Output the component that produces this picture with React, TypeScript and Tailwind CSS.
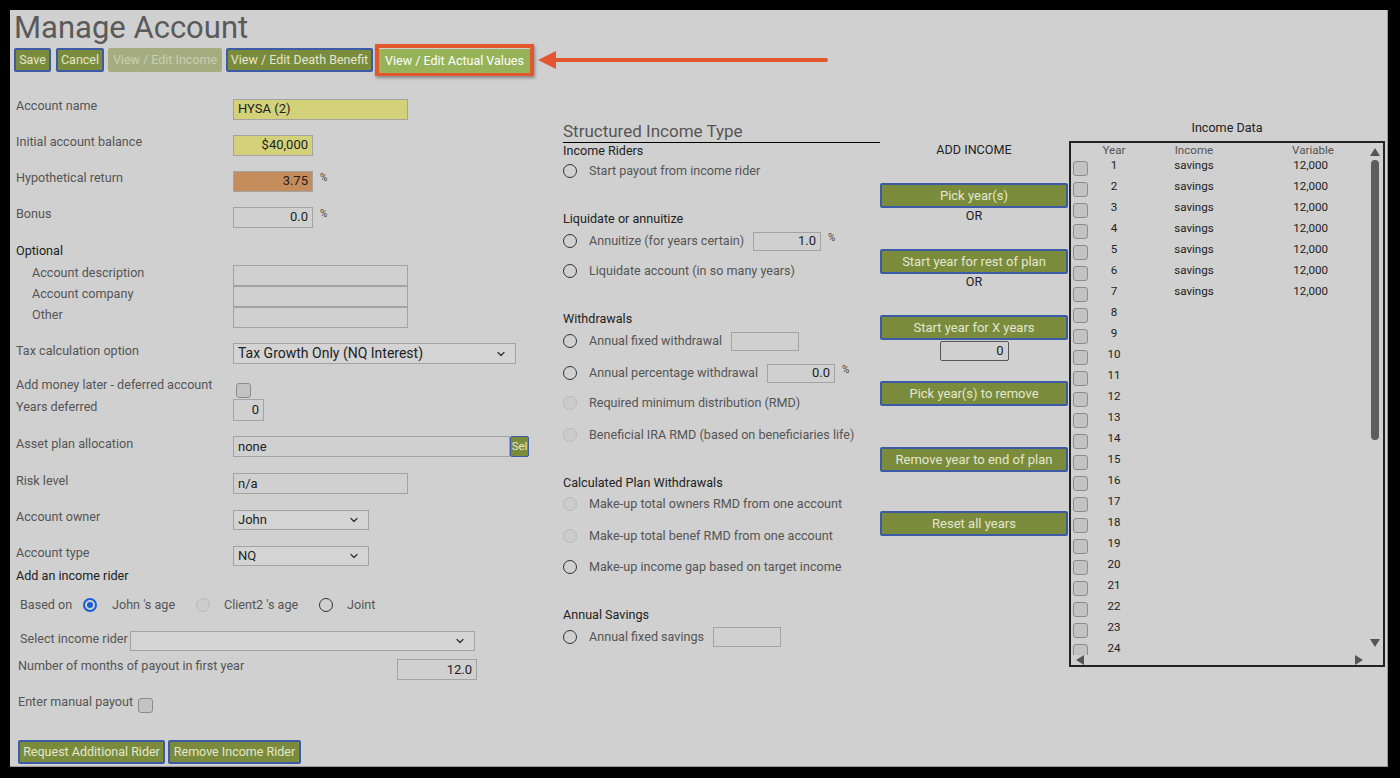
import { ChevronDown } from "lucide-react";

type Kids = { children?: React.ReactNode; className?: string };

function GreenBtn({ children, className = "" }: Kids) {
  return (
    <button
      className={`flex items-center justify-center whitespace-nowrap bg-[#7b8b3c] border-2 border-[#3d5aa6] rounded-[2px] text-[12.5px] leading-none text-[#e3e7cf] ${className}`}
    >
      {children}
    </button>
  );
}

function Radio({ checked, disabled }: { checked?: boolean; disabled?: boolean }) {
  if (checked)
    return (
      <span className="flex h-[14px] w-[14px] shrink-0 items-center justify-center rounded-full border-2 border-[#1a5fd0]">
        <span className="h-[6px] w-[6px] rounded-full bg-[#1a5fd0]" />
      </span>
    );
  return (
    <span
      className={`h-[14px] w-[14px] shrink-0 rounded-full border-[1.5px] ${
        disabled ? "border-[#b8b8b8] bg-[#cccccc]" : "border-[#333333]"
      }`}
    />
  );
}

function Check({ className = "" }: Kids) {
  return (
    <span
      className={`block h-[15px] w-[15px] shrink-0 rounded-[3px] border border-[#8c8c8c] bg-[#c3c3c3] ${className}`}
    />
  );
}

function Field({ children, className = "" }: Kids) {
  return (
    <div
      className={`flex h-full items-center border border-[#a3a3a3] px-[4px] text-[13px] text-[#222] ${className}`}
    >
      {children}
    </div>
  );
}

function Select({ children, className = "" }: Kids) {
  return (
    <div
      className={`flex h-full items-center justify-between border border-[#a3a3a3] bg-[#d4d4d4] pl-[4px] pr-[8px] text-[13px] text-[#222] ${className}`}
    >
      <span>{children}</span>
      <ChevronDown size={12} strokeWidth={2.5} className="text-[#333]" />
    </div>
  );
}

function Pct() {
  return <span className="mb-[8px] ml-[7px] text-[10px] text-[#444]">%</span>;
}

function LRow({ label, h, mt, children }: { label: string; h: string; mt: string; children?: React.ReactNode }) {
  return (
    <div className={`flex items-center ${h} ${mt}`}>
      <span className="w-[219px] shrink-0 pb-[5px] pl-[2px] text-[12.6px] text-[#555]">{label}</span>
      {children}
    </div>
  );
}

function Opt({ label, mt, disabled, children }: { label: string; mt: string; disabled?: boolean; children?: React.ReactNode }) {
  return (
    <div className={`flex h-[20px] items-center ${mt}`}>
      <Radio disabled={disabled} />
      <span className="ml-[12px] text-[12.6px] text-[#555]">{label}</span>
      {children}
    </div>
  );
}

function Head({ children, mt }: { children: React.ReactNode; mt: string }) {
  return <div className={`h-[16px] text-[12.6px] leading-[16px] text-[#222] ${mt}`}>{children}</div>;
}

const data: Record<number, string> = { 1: "12,000", 2: "12,000", 3: "12,000", 4: "12,000", 5: "12,000", 6: "12,000", 7: "12,000" };

export default function App() {
  const years = Array.from({ length: 24 }, (_, i) => i + 1);
  return (
    <div className="h-[778px] w-[1400px] bg-black p-[10px] font-['Roboto','Liberation_Sans',sans-serif]">
      <div className="relative h-[757px] w-[1378px] border-r border-b border-[#9a9a9a] bg-[#d0d0d0] px-[4px]">
        <h1 className="h-[34px] text-[31px] leading-[36px] text-[#5a5a5a]">Manage Account</h1>

        <div className="flex h-[32px] items-center">
          <GreenBtn className="h-[24px] w-[37px]">Save</GreenBtn>
          <GreenBtn className="ml-[5px] h-[24px] w-[48px]">Cancel</GreenBtn>
          <button className="ml-[4px] h-[24px] w-[114px] rounded-[2px] bg-[#a5ad80] text-[12.5px] leading-none text-[#c9cdb3]">
            View / Edit Income
          </button>
          <GreenBtn className="ml-[4px] h-[24px] w-[147px]">View / Edit Death Benefit</GreenBtn>
          <div className="ml-[2px] h-[32px] border-4 border-[#e4572e] shadow-[1px_2px_3px_rgba(0,0,0,0.35)]">
            <button className="h-[24px] w-[151px] bg-[#96b35a] text-[12.5px] leading-none text-white">
              View / Edit Actual Values
            </button>
          </div>
        </div>

        <svg className="absolute left-[526px] top-[40px]" width="300" height="22" viewBox="0 0 300 22">
          <line x1="16" y1="10" x2="290" y2="10" stroke="#e4572e" strokeWidth="4" strokeLinecap="round" />
          <polygon points="2,10 20,1 20,19" fill="#e4572e" />
        </svg>

        <div className="mt-[4px] flex">
          {/* left column */}
          <div className="flex w-[549px] shrink-0 flex-col">
            <LRow label="Account name" h="h-[36px]" mt="mt-[11px]">
              <div className="h-[21px] w-[175px]">
                <Field className="bg-[#d3d27b]">HYSA (2)</Field>
              </div>
            </LRow>
            <LRow label="Initial account balance" h="h-[36px]" mt="mt-0">
              <div className="h-[21px] w-[80px]">
                <Field className="justify-end bg-[#d3d27b]">$40,000</Field>
              </div>
            </LRow>
            <LRow label="Hypothetical return" h="h-[36px]" mt="mt-0">
              <div className="h-[21px] w-[80px]">
                <Field className="justify-end bg-[#c48d5b]">3.75</Field>
              </div>
              <Pct />
            </LRow>
            <LRow label="Bonus" h="h-[36px]" mt="mt-0">
              <div className="h-[21px] w-[80px]">
                <Field className="justify-end">0.0</Field>
              </div>
              <Pct />
            </LRow>
            <div className="mt-[6px] h-[20px] pl-[2px] text-[12.6px] leading-[20px] text-[#222]">Optional</div>
            {["Account description", "Account company", "Other"].map((l, i) => (
              <div key={l} className={`flex h-[21px] items-center ${i === 0 ? "mt-[4px]" : "mt-0"}`}>
                <span className="w-[219px] shrink-0 pb-[5px] pl-[18px] text-[12.6px] text-[#555]">{l}</span>
                <div className="h-[21px] w-[175px]">
                  <Field />
                </div>
              </div>
            ))}
            <LRow label="Tax calculation option" h="h-[21px]" mt="mt-[15px]">
              <div className="h-[21px] w-[283px]">
                <Select className="text-[14px]">Tax Growth Only (NQ Interest)</Select>
              </div>
            </LRow>
            <LRow label="Add money later - deferred account" h="h-[20px]" mt="mt-[14px]">
              <Check className="ml-[3px] mt-[4px]" />
            </LRow>
            <LRow label="Years deferred" h="h-[22px]" mt="mt-[1px]">
              <div className="h-[22px] w-[31px]">
                <Field className="justify-end">0</Field>
              </div>
            </LRow>
            <LRow label="Asset plan allocation" h="h-[21px]" mt="mt-[15px]">
              <div className="h-[21px] w-[277px]">
                <Field className="text-[#5b6a80]">none</Field>
              </div>
              <button className="flex h-[21px] w-[19px] items-center justify-center rounded-[2px] border border-[#3d5aa6] bg-[#7b8b3c] text-[11.5px] leading-none text-[#e3e7cf]">
                Sel
              </button>
            </LRow>
            <LRow label="Risk level" h="h-[21px]" mt="mt-[16px]">
              <div className="h-[21px] w-[175px]">
                <Field>n/a</Field>
              </div>
            </LRow>
            <LRow label="Account owner" h="h-[20px]" mt="mt-[16px]">
              <div className="h-[20px] w-[136px]">
                <Select>John</Select>
              </div>
            </LRow>
            <LRow label="Account type" h="h-[20px]" mt="mt-[16px]">
              <div className="h-[20px] w-[136px]">
                <Select>NQ</Select>
              </div>
            </LRow>
            <div className="mt-[2px] h-[16px] pl-[2px] text-[12.6px] leading-[16px] text-[#222]">Add an income rider</div>
            <div className="mt-[11px] flex h-[20px] items-center pl-[6px] text-[12.6px] text-[#555]">
              <span className="w-[63px]">Based on</span>
              <Radio checked />
              <span className="ml-[15px] w-[84px]">John 's age</span>
              <Radio disabled />
              <span className="ml-[14px] w-[95px]">Client2 's age</span>
              <Radio />
              <span className="ml-[14px]">Joint</span>
            </div>
            <div className="mt-[16px] flex h-[20px] items-center pl-[6px]">
              <span className="w-[110px] whitespace-nowrap pb-[4px] text-[12.6px] text-[#555]">Select income rider</span>
              <div className="h-[20px] w-[345px]">
                <Select />
              </div>
            </div>
            <div className="mt-[8px] flex h-[21px] items-center pl-[4px]">
              <span className="w-[379px] pb-[6px] text-[12.6px] text-[#555]">Number of months of payout in first year</span>
              <div className="h-[21px] w-[80px]">
                <Field className="justify-end">12.0</Field>
              </div>
            </div>
            <div className="mt-[13px] flex h-[20px] items-center pl-[4px]">
              <span className="pb-[2px] text-[12.6px] text-[#555]">Enter manual payout</span>
              <Check className="ml-[5px] mt-[4px]" />
            </div>
            <div className="mt-[27px] flex pl-[4px]">
              <GreenBtn className="h-[24px] w-[147px]">Request Additional Rider</GreenBtn>
              <GreenBtn className="ml-[3px] h-[24px] w-[133px]">Remove Income Rider</GreenBtn>
            </div>
          </div>

          {/* middle column */}
          <div className="flex w-[317px] shrink-0 flex-col">
            <div className="mt-[41px] h-[22px] border-b border-black text-[17px] leading-[20px] text-[#555]">
              Structured Income Type
            </div>
            <Head mt="mt-0">Income Riders</Head>
            <Opt label="Start payout from income rider" mt="mt-[2px]" />
            <Head mt="mt-[30px]">Liquidate or annuitize</Head>
            <Opt label="" mt="mt-[4px]">
              <span className="-ml-[12px] w-[176px] pl-[12px] text-[12.6px] text-[#555]">Annuitize (for years certain)</span>
              <div className="h-[19px] w-[68px]">
                <Field className="justify-end">1.0</Field>
              </div>
              <Pct />
            </Opt>
            <Opt label="Liquidate account (in so many years)" mt="mt-[10px]" />
            <Head mt="mt-[30px]">Withdrawals</Head>
            <Opt label="" mt="mt-[4px]">
              <span className="-ml-[12px] w-[154px] pl-[12px] text-[12.6px] text-[#555]">Annual fixed withdrawal</span>
              <div className="h-[19px] w-[68px]">
                <Field />
              </div>
            </Opt>
            <Opt label="" mt="mt-[12px]">
              <span className="-ml-[12px] w-[190px] pl-[12px] text-[12.6px] text-[#555]">Annual percentage withdrawal</span>
              <div className="h-[19px] w-[68px]">
                <Field className="justify-end">0.0</Field>
              </div>
              <Pct />
            </Opt>
            <Opt label="Required minimum distribution (RMD)" mt="mt-[10px]" disabled />
            <Opt label="Beneficial IRA RMD (based on beneficiaries life)" mt="mt-[12px]" disabled />
            <Head mt="mt-[30px]">Calculated Plan Withdrawals</Head>
            <Opt label="Make-up total owners RMD from one account" mt="mt-[3px]" disabled />
            <Opt label="Make-up total benef RMD from one account" mt="mt-[12px]" disabled />
            <Opt label="Make-up income gap based on target income" mt="mt-[11px]" />
            <Head mt="mt-[30px]">Annual Savings</Head>
            <Opt label="" mt="mt-[4px]">
              <span className="-ml-[12px] w-[136px] pl-[12px] text-[12.6px] text-[#555]">Annual fixed savings</span>
              <div className="h-[20px] w-[68px]">
                <Field />
              </div>
            </Opt>
          </div>

          {/* add income column */}
          <div className="flex w-[188px] shrink-0 flex-col items-center text-[12.6px] text-[#222]">
            <div className="mt-[62px] h-[16px] leading-[16px]">ADD INCOME</div>
            <GreenBtn className="mt-[25px] h-[25px] w-[188px] text-[13px]">Pick year(s)</GreenBtn>
            <div className="h-[16px] leading-[16px]">OR</div>
            <GreenBtn className="mt-[25px] h-[25px] w-[188px] text-[13px]">Start year for rest of plan</GreenBtn>
            <div className="h-[16px] leading-[16px]">OR</div>
            <GreenBtn className="mt-[25px] h-[25px] w-[188px] text-[13px]">Start year for X years</GreenBtn>
            <div className="mt-[1px] flex h-[20px] w-[69px] items-center justify-end rounded-[2px] border border-[#555] px-[4px] text-[13px]">
              0
            </div>
            <GreenBtn className="mt-[20px] h-[25px] w-[188px] text-[13px]">Pick year(s) to remove</GreenBtn>
            <GreenBtn className="mt-[41px] h-[25px] w-[188px] text-[13px]">Remove year to end of plan</GreenBtn>
            <GreenBtn className="mt-[39px] h-[25px] w-[188px] text-[13px]">Reset all years</GreenBtn>
          </div>

          {/* income data */}
          <div className="ml-[1px] flex w-[316px] shrink-0 flex-col">
            <div className="mt-[40px] h-[16px] text-center text-[12.6px] leading-[16px] text-[#222]">Income Data</div>
            <div className="mt-[5px] flex h-[526px] flex-col border-2 border-[#222]">
              <div className="flex h-[512px]">
                <div className="flex-1 overflow-hidden text-[11.6px]">
                  <div className="flex h-[14px] items-center leading-[14px] text-[#555]">
                    <span className="w-[17px]" />
                    <span className="w-[52px] text-center">Year</span>
                    <span className="w-[108px] text-center">Income</span>
                    <span className="w-[86px] text-right">Variable</span>
                  </div>
                  {years.map((y) => (
                    <div key={y} className="flex h-[21px] items-start pl-[2px] pt-[2px] leading-[12px] text-[#222]">
                      <Check className="mt-[2px]" />
                      <span className="w-[52px] text-center">{y}</span>
                      <span className="w-[108px] text-center">{data[y] ? "savings" : ""}</span>
                      <span className="w-[80px] text-right">{data[y] ?? ""}</span>
                    </div>
                  ))}
                </div>
                <div className="flex w-[16px] flex-col items-center">
                  <svg className="mt-[5px]" width="10" height="8" viewBox="0 0 10 8">
                    <polygon points="5,0 10,8 0,8" fill="#555" />
                  </svg>
                  <div className="mt-[4px] h-[280px] w-[8px] rounded-full bg-[#5d5d5d]" />
                  <div className="flex-1" />
                  <svg className="mb-[8px]" width="10" height="8" viewBox="0 0 10 8">
                    <polygon points="0,0 10,0 5,8" fill="#555" />
                  </svg>
                </div>
              </div>
              <div className="flex h-[10px] items-center justify-between pl-[5px] pr-[20px]">
                <svg width="8" height="10" viewBox="0 0 8 10">
                  <polygon points="0,5 8,0 8,10" fill="#555" />
                </svg>
                <svg width="8" height="10" viewBox="0 0 8 10">
                  <polygon points="0,0 8,5 0,10" fill="#555" />
                </svg>
              </div>
            </div>
          </div>
        </div>
      </div>
    </div>
  );
}
